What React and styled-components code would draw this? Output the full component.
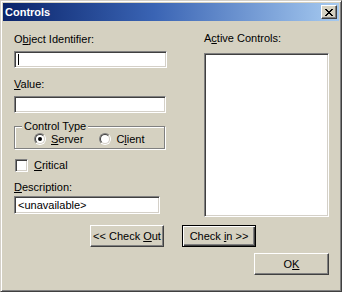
import React from "react";
import styled, { createGlobalStyle } from "styled-components";

const Global = createGlobalStyle`
  html, body {
    margin: 0;
    padding: 0;
    background: #d5d1c1;
  }
  * {
    box-sizing: border-box;
  }
`;

const Window = styled.div`
  width: 342px;
  height: 292px;
  background: #d5d1c1;
  border: 1px solid;
  border-color: #d4d0c8 #404040 #404040 #d4d0c8;
  box-shadow: inset 1px 1px 0 #ffffff, inset -1px -1px 0 #808080;
  padding: 2px;
  display: flex;
  flex-direction: column;
  font-family: "Liberation Sans", Arial, sans-serif;
  font-size: 11px;
  line-height: 13px;
  color: #000;
`;

const Caption = styled.div`
  height: 18px;
  flex: none;
  display: flex;
  align-items: center;
  justify-content: space-between;
  padding: 0 2px 0 2px;
  background: linear-gradient(to right, #0a246a, #3a64b4 45%, #a6caf0);
`;

const CaptionText = styled.span`
  color: #fff;
  font-weight: bold;
  font-size: 11px;
`;

const CloseButton = styled.div`
  width: 16px;
  height: 14px;
  background: #d5d1c1;
  border: 1px solid;
  border-color: #ffffff #404040 #404040 #ffffff;
  box-shadow: inset -1px -1px 0 #808080;
  display: flex;
  align-items: center;
  justify-content: center;
`;

const Body = styled.div`
  padding: 0 0 0 11px;
  display: flex;
  flex-direction: column;
`;

const Columns = styled.div`
  display: flex;
  align-items: flex-start;
`;

const LeftColumn = styled.div`
  width: 153px;
  display: flex;
  flex-direction: column;
  align-items: flex-start;
`;

const RightColumn = styled.div`
  width: 125px;
  margin-left: 37px;
  display: flex;
  flex-direction: column;
`;

const Label = styled.div`
  margin-top: ${(p) => p.$top}px;
  height: 13px;
  white-space: nowrap;
`;

const Sunken = styled.div`
  background: #fff;
  border: 1px solid;
  border-color: #808080 #ffffff #ffffff #808080;
  box-shadow: inset 1px 1px 0 #404040, inset -1px -1px 0 #d4d0c8;
`;

const TextBox = styled(Sunken)`
  width: ${(p) => p.$w}px;
  height: ${(p) => p.$h || 17}px;
  margin-top: ${(p) => p.$top}px;
  padding: 1px 3px;
  display: flex;
  align-items: center;
  white-space: nowrap;
`;

const Caret = styled.span`
  width: 1px;
  height: 11px;
  background: #000;
`;

const ListBox = styled(Sunken)`
  width: 125px;
  height: 164px;
  margin-top: 8px;
`;

const Group = styled.div`
  position: relative;
  width: 151px;
  height: 23px;
  margin-top: 13px;
  margin-bottom: 1px;
  border: 1px solid #808080;
  box-shadow: 1px 1px 0 #ffffff, inset 1px 1px 0 #ffffff;
  display: flex;
  align-items: flex-start;
  padding: 6px 0 0 19px;
  gap: 6px;
`;

const Legend = styled.span`
  position: absolute;
  top: -7px;
  left: 7px;
  padding: 0 2px;
  background: #d5d1c1;
  white-space: nowrap;
`;

const Choice = styled.div`
  display: flex;
  align-items: center;
  gap: 5px;
  height: 12px;
  margin-right: ${(p) => p.$gap || 0}px;
`;

const RadioOuter = styled.span`
  width: 12px;
  height: 12px;
  border-radius: 50%;
  border: 1px solid;
  border-color: #808080 #ffffff #ffffff #808080;
  display: flex;
`;

const RadioInner = styled.span`
  width: 10px;
  height: 10px;
  border-radius: 50%;
  border: 1px solid;
  border-color: #404040 #d4d0c8 #d4d0c8 #404040;
  background: #fff;
  display: flex;
  align-items: center;
  justify-content: center;
`;

const Dot = styled.span`
  width: 4px;
  height: 4px;
  border-radius: 50%;
  background: #000;
`;

const CheckRow = styled.div`
  margin-top: 9px;
  display: flex;
  align-items: center;
  gap: 6px;
  height: 13px;
  padding-left: 1px;
`;

const CheckBox = styled(Sunken)`
  width: 13px;
  height: 13px;
`;

const ButtonRow = styled.div`
  display: flex;
  gap: 18px;
  margin-top: ${(p) => p.$top}px;
  padding-left: ${(p) => p.$left || 0}px;
  justify-content: ${(p) => (p.$end ? "flex-end" : "flex-start")};
  padding-right: ${(p) => (p.$end ? 10 : 0)}px;
`;

const Button = styled.div`
  width: ${(p) => p.$w || 74}px;
  height: 22px;
  display: flex;
  align-items: center;
  justify-content: center;
  white-space: pre;
  border: 1px solid;
  border-color: ${(p) =>
    p.$default ? "#000 #000 #000 #000" : "#ffffff #404040 #404040 #ffffff"};
  box-shadow: ${(p) =>
    p.$default
      ? "inset 1px 1px 0 #ffffff, inset -1px -1px 0 #404040, inset -2px -2px 0 #808080"
      : "inset -1px -1px 0 #808080"};
`;

const U = styled.span`
  text-decoration: underline;
  text-underline-offset: 1px;
`;

function CloseGlyph() {
  return (
    <svg width="8" height="7" viewBox="0 0 8 7" shapeRendering="crispEdges">
      <path
        fill="#000"
        d="M0 0h2v1H0zM6 0h2v1H6zM1 1h2v1H1zM5 1h2v1H5zM2 2h4v1H2zM3 3h2v1H3zM2 4h4v1H2zM1 5h2v1H1zM5 5h2v1H5zM0 6h2v1H0zM6 6h2v1H6z"
      />
    </svg>
  );
}

function Radio({ checked }) {
  return (
    <RadioOuter>
      <RadioInner>{checked && <Dot />}</RadioInner>
    </RadioOuter>
  );
}

export default function App() {
  return (
    <>
      <Global />
      <Window>
        <Caption>
          <CaptionText>Controls</CaptionText>
          <CloseButton>
            <CloseGlyph />
          </CloseButton>
        </Caption>
        <Body>
          <Columns>
            <LeftColumn>
              <Label $top={12}>
                O<U>b</U>ject Identifier:
              </Label>
              <TextBox $w={153} $top={5}>
                <Caret />
              </TextBox>
              <Label $top={10}>
                <U>V</U>alue:
              </Label>
              <TextBox $w={152} $top={5} />
              <Group>
                <Legend>Control Type</Legend>
                <Choice $gap={10}>
                  <Radio checked />
                  <span>
                    <U>S</U>erver
                  </span>
                </Choice>
                <Choice>
                  <Radio />
                  <span>
                    C<U>l</U>ient
                  </span>
                </Choice>
              </Group>
              <CheckRow>
                <CheckBox />
                <span>
                  <U>C</U>ritical
                </span>
              </CheckRow>
              <Label $top={9}>
                <U>D</U>escription:
              </Label>
              <TextBox $w={146} $h={18} $top={2}>
                &lt;unavailable&gt;
              </TextBox>
            </LeftColumn>
            <RightColumn>
              <Label $top={11}>
                A<U>c</U>tive Controls:
              </Label>
              <ListBox />
            </RightColumn>
          </Columns>
          <ButtonRow $top={8} $left={76}>
            <Button>
              <span>
                &lt;&lt; Check <U>O</U>ut
              </span>
            </Button>
            <Button $default>
              <span>
                Check <U>i</U>n &gt;&gt;
              </span>
            </Button>
          </ButtonRow>
          <ButtonRow $top={6} $end>
            <Button $w={75}>
              <span>
                O<U>K</U>
              </span>
            </Button>
          </ButtonRow>
        </Body>
      </Window>
    </>
  );
}
